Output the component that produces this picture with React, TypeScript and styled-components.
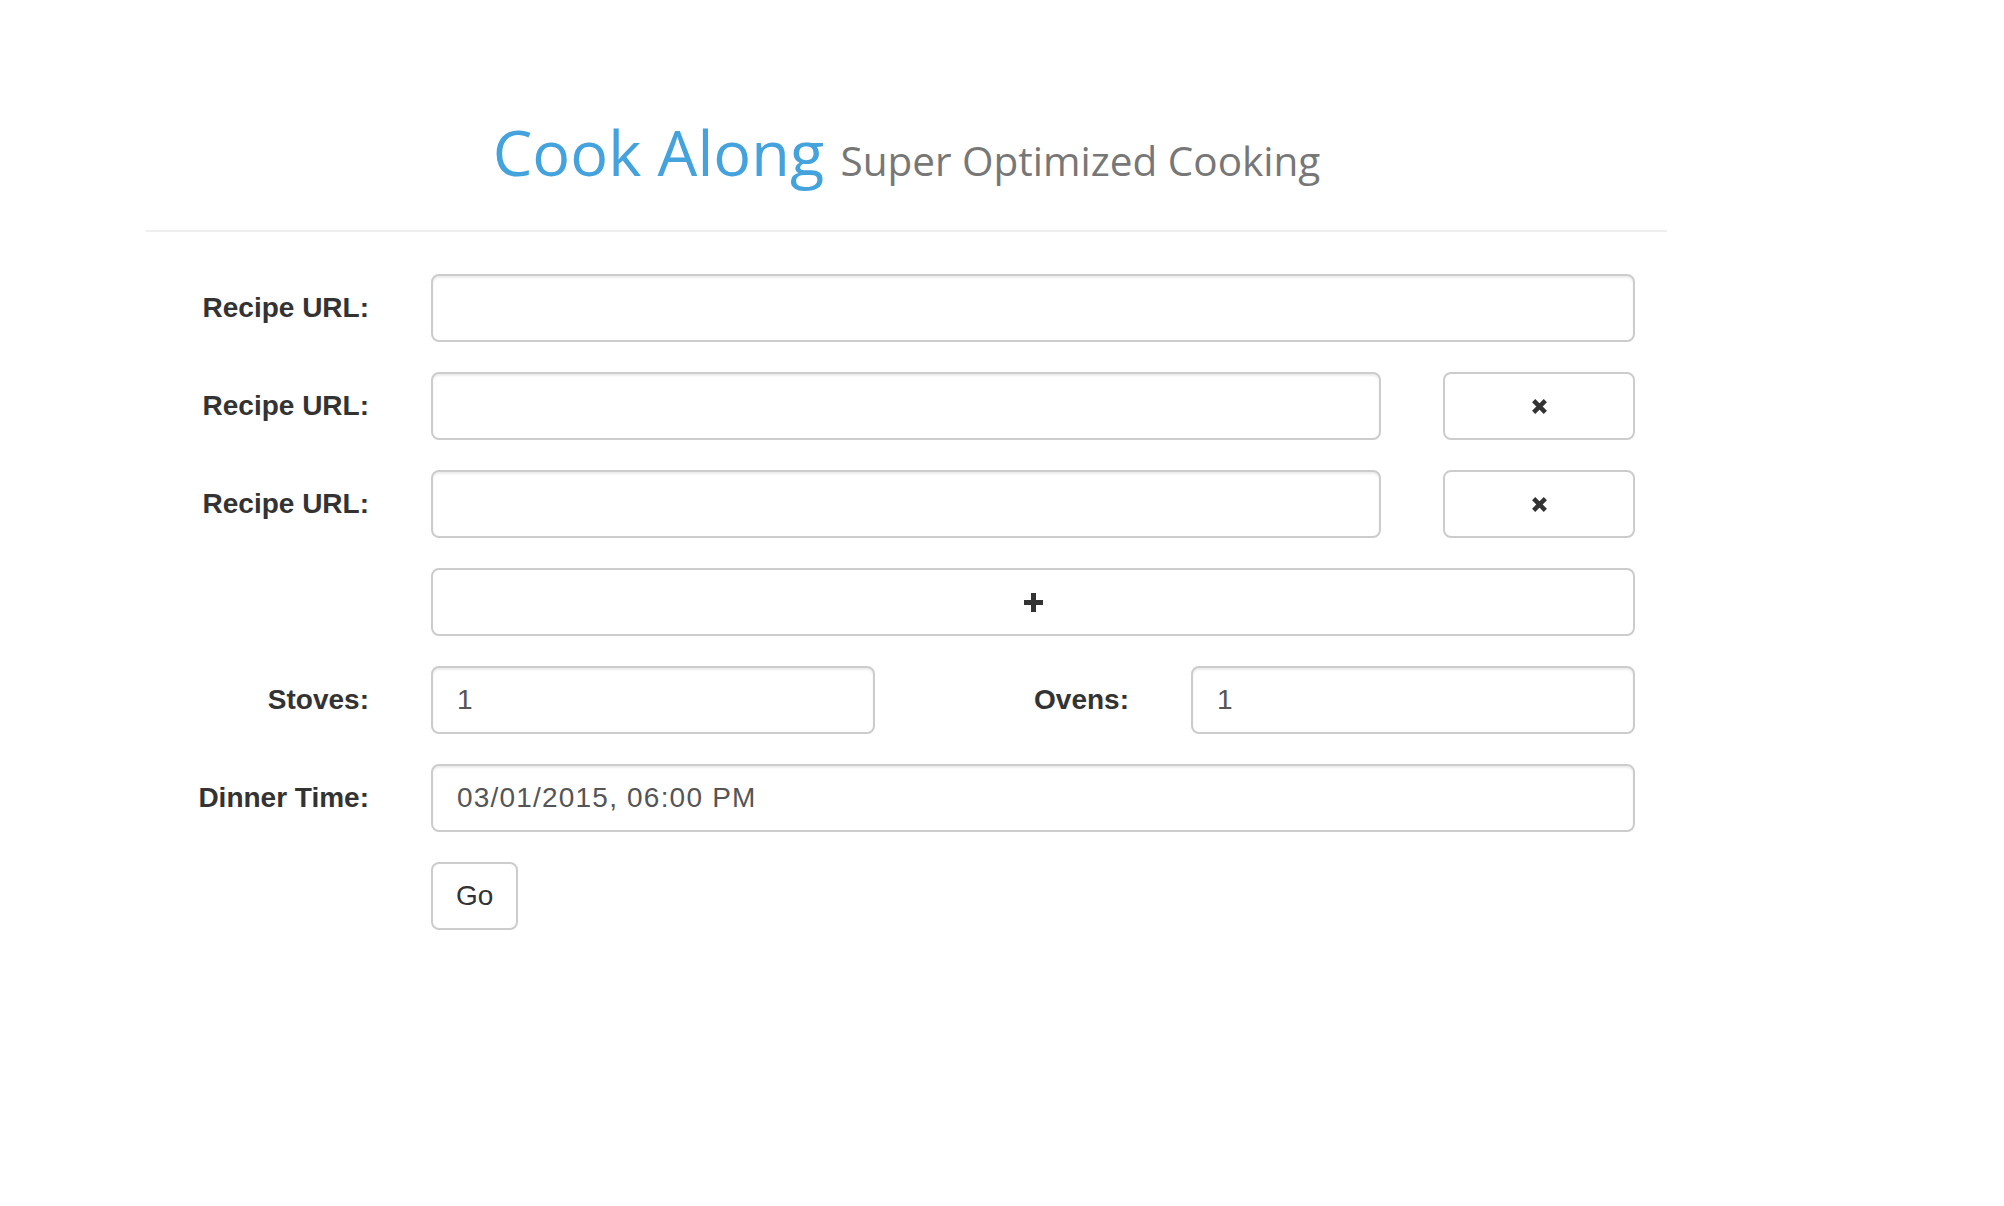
import { FC } from 'react';
import styled, { createGlobalStyle } from 'styled-components';

const GlobalStyle = createGlobalStyle`
  body {
    margin: 0;
    background-color: #fff;
    font-family: 'Liberation Sans', Arial, Helvetica, sans-serif;
    color: #333;
  }
`;

const Container = styled.div`
  margin-left: 146px;
  width: 1521px;
`;

const PageHeader = styled.div`
  padding: 118px 0 35px;
  border-bottom: 2px solid #eee;
  text-align: center;
`;

const Title = styled.h1`
  margin: 0;
  font-family: 'Open Sans', 'Noto Sans', sans-serif;
  font-weight: 400;
  font-size: 63px;
  line-height: 68px;
  color: #44a2dd;
`;

const Subtitle = styled.small`
  font-size: 40.5px;
  color: #777;
`;

const Form = styled.form`
  display: flex;
  flex-direction: column;
  gap: 30px;
  margin-top: 42px;
  padding-right: 32px;
`;

type RowKind = 'full' | 'remove' | 'pair';

const columns: Record<RowKind, string> = {
  full: '223px 1fr',
  remove: '223px 1fr 192px',
  pair: '223px 1fr 192px 1fr',
};

const Row = styled.div<{ $kind: RowKind }>`
  display: grid;
  grid-template-columns: ${(props) => columns[props.$kind]};
  column-gap: 62px;
  align-items: center;
`;

const Label = styled.label`
  text-align: right;
  font-weight: 700;
  font-size: 28px;
  color: #333;
`;

const Input = styled.input`
  width: 100%;
  height: 68px;
  box-sizing: border-box;
  padding: 12px 24px;
  border: 2px solid #ccc;
  border-radius: 8px;
  background-color: #fff;
  box-shadow: inset 0 2px 2px rgba(0, 0, 0, 0.075);
  font-family: 'Liberation Sans', Arial, sans-serif;
  font-size: 28px;
  color: #555;
  letter-spacing: ${(props) => (props.type === 'datetime' ? '1.2px' : '0')};
  outline: none;
`;

const Button = styled.button<{ $wide?: boolean }>`
  height: 68px;
  box-sizing: border-box;
  display: flex;
  align-items: center;
  justify-content: center;
  padding: 0 23px;
  border: 2px solid #ccc;
  border-radius: 8px;
  background-color: #fff;
  font-family: 'Liberation Sans', Arial, sans-serif;
  font-size: 28px;
  color: #333;
  cursor: pointer;
  width: ${(props) => (props.$wide ? '100%' : 'auto')};
  justify-self: ${(props) => (props.$wide ? 'stretch' : 'start')};
`;

const RemoveIcon: FC = () => (
  <svg width="17" height="17" viewBox="0 0 16 16">
    <path d="M2.5 2.5 L13.5 13.5 M13.5 2.5 L2.5 13.5" stroke="#333" strokeWidth="4.2" />
  </svg>
);

const PlusIcon: FC = () => (
  <svg width="19" height="19" viewBox="0 0 16 16">
    <rect x="0" y="5.9" width="16" height="4.2" fill="#333" />
    <rect x="5.9" y="0" width="4.2" height="16" fill="#333" />
  </svg>
);

const App: FC = () => {
  return (
    <>
      <GlobalStyle />
      <Container>
        <PageHeader>
          <Title>
            Cook Along <Subtitle>Super Optimized Cooking</Subtitle>
          </Title>
        </PageHeader>
        <Form onSubmit={(e) => e.preventDefault()}>
          <Row $kind="full">
            <Label>Recipe URL:</Label>
            <Input type="text" />
          </Row>
          <Row $kind="remove">
            <Label>Recipe URL:</Label>
            <Input type="text" />
            <Button type="button" $wide>
              <RemoveIcon />
            </Button>
          </Row>
          <Row $kind="remove">
            <Label>Recipe URL:</Label>
            <Input type="text" />
            <Button type="button" $wide>
              <RemoveIcon />
            </Button>
          </Row>
          <Row $kind="full">
            <span />
            <Button type="button" $wide>
              <PlusIcon />
            </Button>
          </Row>
          <Row $kind="pair">
            <Label>Stoves:</Label>
            <Input type="text" defaultValue="1" />
            <Label>Ovens:</Label>
            <Input type="text" defaultValue="1" />
          </Row>
          <Row $kind="full">
            <Label>Dinner Time:</Label>
            <Input type="datetime" defaultValue="03/01/2015, 06:00 PM" />
          </Row>
          <Row $kind="full">
            <span />
            <Button type="submit">Go</Button>
          </Row>
        </Form>
      </Container>
    </>
  );
};

export default App;
